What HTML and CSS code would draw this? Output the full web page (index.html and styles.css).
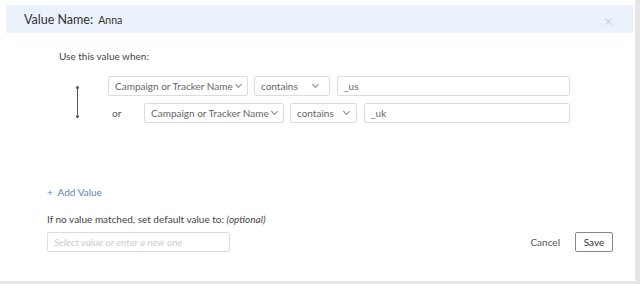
FILE: index.html
```html
<!DOCTYPE html>
<html lang="en">
  <head>
    <meta charset="UTF-8" />
    <meta name="viewport" content="width=device-width, initial-scale=1.0" />
    <title>Value Name</title>
    <link rel="stylesheet" href="styles.css">
  </head>
  <body>
    <div class="page">
      <div class="modal">
        <div class="header">
          <div class="title">Value Name: <span class="name">Anna</span></div>
          <span class="close">&times;</span>
        </div>
        <div class="content">
          <div class="lead">Use this value when:</div>
          <div class="conditions">
            <div class="connector">
              <span class="dot"></span>
              <span class="line"></span>
              <span class="dot"></span>
            </div>
            <div class="rows">
              <div class="row">
                <div class="select field-wide">Campaign or Tracker Name<span class="caret"></span></div>
                <div class="select op-wide">contains<span class="caret"></span></div>
                <div class="input value-wide">_us</div>
              </div>
              <div class="row">
                <span class="or">or</span>
                <div class="select field-wide">Campaign or Tracker Name<span class="caret"></span></div>
                <div class="select op-narrow">contains<span class="caret"></span></div>
                <div class="input value-narrow">_uk</div>
              </div>
            </div>
          </div>
          <div class="add">+ &nbsp;Add Value</div>
          <div class="label">If no value matched, set default value to: <em>(optional)</em></div>
          <div class="footer">
            <div class="input default">Select value or enter a new one</div>
            <div class="actions">
              <span class="cancel">Cancel</span>
              <span class="save">Save</span>
            </div>
          </div>
        </div>
      </div>
      <div class="bottom"></div>
    </div>
    <div class="scrollbar"></div>
  </body>
</html>
```

FILE: styles.css
```css
html,
body {
  margin: 0;
  width: 640px;
  height: 284px;
  overflow: hidden;
}
body {
  display: flex;
  background: #fff;
  font-family: Lato, "Open Sans", sans-serif;
  color: #444;
}
.page {
  flex: 1;
  display: flex;
  flex-direction: column;
  padding-top: 5px;
}
.modal {
  flex: 1;
  margin-left: 6px;
  margin-right: 2px;
}
.scrollbar {
  width: 5px;
  background: #e6e6e6;
}
.bottom {
  height: 3px;
  background: #e6e6e6;
}

.header {
  height: 28px;
  background: #ebf2fc;
  display: flex;
  align-items: center;
  justify-content: space-between;
  padding: 0 20px 0 18px;
}
.title {
  font-size: 12.5px;
  color: #333;
}
.name {
  font-size: 10.5px;
  margin-left: 2px;
}
.close {
  color: #bbb;
  font-size: 16px;
  font-weight: 300;
  margin-top: 2px;
}

.content {
  padding: 16px 0 0 41px;
  font-size: 10px;
}
.lead {
  padding-left: 12px;
  line-height: 14px;
}
.conditions {
  display: flex;
  margin-top: 13px;
}
.connector {
  width: 62px;
  display: flex;
  flex-direction: column;
  align-items: center;
  padding-top: 10px;
  box-sizing: border-box;
  margin-left: -1px;
}
.connector .line {
  width: 1px;
  height: 26px;
  background: #555;
}
.connector .dot {
  width: 3px;
  height: 3px;
  border-radius: 50%;
  background: #555;
}
.rows {
  display: flex;
  flex-direction: column;
  gap: 7px;
}
.row {
  display: flex;
  align-items: center;
}
.or {
  width: 36px;
  padding-left: 4px;
  box-sizing: border-box;
  color: #555;
}
.select,
.input {
  height: 20px;
  box-sizing: border-box;
  border: 1px solid #dcdcdc;
  border-radius: 2px;
  display: flex;
  align-items: center;
  padding: 0 6px;
  color: #666;
  white-space: nowrap;
}
.select {
  justify-content: space-between;
  margin-right: 6px;
}
.caret {
  flex: none;
  width: 4px;
  height: 4px;
  border-right: 1px solid #888;
  border-bottom: 1px solid #888;
  transform: rotate(45deg);
  margin: -3px 1px 0 3px;
}
.field-wide {
  width: 140px;
}
.op-wide {
  width: 76px;
  padding-right: 10px;
}
.op-narrow {
  width: 67px;
}
.input {
  margin-left: 1px;
}
.value-wide {
  width: 233px;
}
.value-narrow {
  width: 206px;
}

.add {
  margin-top: 62px;
  color: #5d86b3;
  line-height: 14px;
}
.label {
  margin-top: 13px;
  line-height: 14px;
}
.label em {
  font-style: italic;
}
.footer {
  display: flex;
  align-items: center;
  justify-content: space-between;
  margin-top: 6px;
  padding-right: 20px;
}
.default {
  width: 183px;
  margin-left: 0;
  color: #ccc;
  font-style: italic;
}
.actions {
  display: flex;
  align-items: center;
  gap: 15px;
}
.cancel {
  color: #555;
}
.save {
  height: 20px;
  width: 38px;
  box-sizing: border-box;
  border: 1px solid #888;
  border-radius: 2px;
  display: flex;
  align-items: center;
  justify-content: center;
  color: #333;
}
```
